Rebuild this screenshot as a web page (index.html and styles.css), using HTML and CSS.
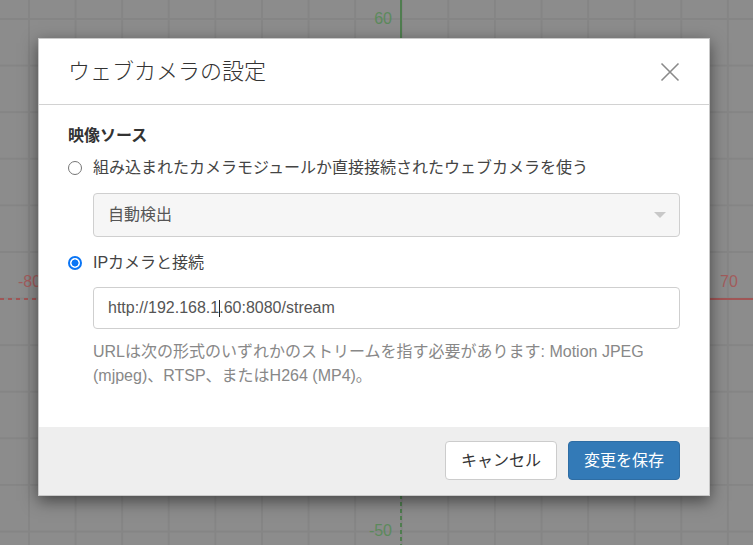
FILE: index.html
```html
<!DOCTYPE html>
<html lang="ja">
<head>
<meta charset="utf-8">
<title>ウェブカメラの設定</title>
<link rel="stylesheet" href="styles.css">
</head>
<body>
  <div class="canvas">
    <div class="axis-y-solid"></div>
    <div class="axis-y-dashed"></div>
    <div class="axis-x-dashed"></div>
    <div class="axis-x-solid"></div>
    <span class="tick tick-y tick-top">60</span>
    <span class="tick tick-y tick-bottom">-50</span>
    <span class="tick tick-x tick-left">-80</span>
    <span class="tick tick-x tick-right">70</span>
  </div>

  <div class="modal">
    <div class="modal-header">
      <h1 class="modal-title">ウェブカメラの設定</h1>
      <button class="close" type="button" aria-label="閉じる">
        <svg width="20" height="20" viewBox="0 0 20 20">
          <path d="M1.5 1.5 L18.5 18.5 M18.5 1.5 L1.5 18.5" stroke="#8a8a8a" stroke-width="1.6" fill="none"/>
        </svg>
      </button>
    </div>

    <div class="modal-body">
      <div class="section-title">映像ソース</div>

      <label class="radio-row">
        <input class="radio" type="radio" name="src">
        <span>組み込まれたカメラモジュールか直接接続されたウェブカメラを使う</span>
      </label>
      <div class="indent">
        <div class="select">
          <span>自動検出</span>
          <span class="caret-down"></span>
        </div>
      </div>

      <label class="radio-row second">
        <input class="radio" type="radio" name="src" checked>
        <span>IPカメラと接続</span>
      </label>
      <div class="indent">
        <div class="input">http://192.168.1<span class="text-cursor"></span>.60:8080/stream</div>
        <p class="help">URLは次の形式のいずれかのストリームを指す必要があります: Motion JPEG (mjpeg)、RTSP、またはH264 (MP4)。</p>
      </div>
    </div>

    <div class="modal-footer">
      <button class="btn btn-default" type="button">キャンセル</button>
      <button class="btn btn-primary" type="button">変更を保存</button>
    </div>
  </div>
</body>
</html>
```

FILE: styles.css
```css
html, body {
  margin: 0;
  padding: 0;
}

body {
  width: 753px;
  height: 545px;
  overflow: hidden;
  position: relative;
  font-family: "Liberation Sans", "Noto Sans CJK JP", sans-serif;
  font-size: 16px;
  line-height: 24px;
  color: #333;
  background-color: #8c8c8c;
}

.canvas {
  position: absolute;
  inset: 0;
  background-image:
    linear-gradient(to right, #858585 2px, transparent 2px),
    linear-gradient(to bottom, #858585 2px, transparent 2px);
  background-size: 46.6px 46.6px;
  background-position: 28px 18px;
}

.axis-y-solid {
  position: absolute;
  left: 400px;
  top: 0;
  width: 2px;
  height: 299px;
  background: #4f7d4f;
}

.axis-y-dashed {
  position: absolute;
  left: 400px;
  top: 299px;
  width: 2px;
  height: 246px;
  background: repeating-linear-gradient(to bottom, #4f7d4f 0 4px, transparent 4px 7px);
}

.axis-x-dashed {
  position: absolute;
  left: 0;
  top: 298px;
  width: 401px;
  height: 2px;
  background: repeating-linear-gradient(to right, #a05656 0 4px, transparent 4px 8px);
}

.axis-x-solid {
  position: absolute;
  left: 401px;
  top: 298px;
  width: 352px;
  height: 2px;
  background: #a05656;
}

.tick {
  position: absolute;
  font-family: "Liberation Sans", sans-serif;
  font-size: 16px;
  line-height: 18px;
}

.tick-y { color: #5c8a5c; }
.tick-x { color: #a25c5c; }

.tick-top { right: 361px; top: 10px; }
.tick-bottom { right: 361px; top: 522px; }
.tick-left { left: 18px; top: 273px; }
.tick-right { left: 720px; top: 273px; }

.modal {
  position: relative;
  box-sizing: border-box;
  margin: 38px 0 0 38px;
  width: 672px;
  background: #fff;
  border: 1px solid #c9c9c9;
  box-shadow: 0 5px 15px rgba(0, 0, 0, 0.5);
}

.modal-header {
  height: 65px;
  display: flex;
  align-items: center;
  justify-content: space-between;
  padding: 0 29px 0 29px;
  border-bottom: 1px solid #d2d2d2;
}

.modal-title {
  margin: 0;
  font-size: 22px;
  font-weight: 300;
  line-height: 30px;
  color: #333;
}

.close {
  border: 0;
  background: none;
  padding: 0;
  width: 20px;
  height: 20px;
  margin-right: 0;
  display: flex;
}

.modal-body {
  padding: 19px 29px 39px 29px;
}

.section-title {
  font-weight: bold;
  color: #333;
}

.radio-row {
  display: flex;
  align-items: center;
  gap: 11px;
  margin-top: 8px;
  color: #444;
}

.radio-row.second {
  margin-top: 14px;
}

.radio {
  appearance: none;
  -webkit-appearance: none;
  box-sizing: border-box;
  width: 14px;
  height: 14px;
  margin: 0;
  flex: none;
  border-radius: 50%;
  border: 1px solid #767676;
  background: #fff;
}

.radio:checked {
  border: 2px solid #0a75f5;
  background: radial-gradient(circle, #0a75f5 0 3.2px, #fff 3.8px);
}

.indent {
  margin-left: 25px;
}

.select {
  margin-top: 13px;
  height: 44px;
  box-sizing: border-box;
  border: 1px solid #cfcfcf;
  border-radius: 4px;
  background: #f6f6f6;
  display: flex;
  align-items: center;
  justify-content: space-between;
  padding: 0 13px 0 14px;
  color: #555;
}

.caret-down {
  width: 0;
  height: 0;
  border-left: 6px solid transparent;
  border-right: 6px solid transparent;
  border-top: 6px solid #c8c8c8;
}

.input {
  margin-top: 12px;
  height: 42px;
  box-sizing: border-box;
  border: 1px solid #cfcfcf;
  border-radius: 4px;
  background: #fff;
  display: flex;
  align-items: center;
  padding: 0 14px;
  color: #555;
  white-space: nowrap;
}

.text-cursor {
  display: inline-block;
  width: 1px;
  height: 17px;
  background: #222;
  margin-right: -1px;
}

.help {
  margin: 11px 0 0 0;
  color: #888;
}

.modal-footer {
  background: #eee;
  padding: 14px 29px 15px 29px;
  display: flex;
  justify-content: flex-end;
  gap: 11px;
}

.btn {
  height: 39px;
  box-sizing: border-box;
  padding: 0 15px;
  font-family: "Liberation Sans", "Noto Sans CJK JP", sans-serif;
  font-size: 16px;
  line-height: 24px;
  border-radius: 4px;
  border: 1px solid transparent;
}

.btn-default {
  background: #fff;
  border-color: #ccc;
  color: #333;
}

.btn-primary {
  background: #337ab7;
  border-color: #2e6da4;
  color: #fff;
}
```
